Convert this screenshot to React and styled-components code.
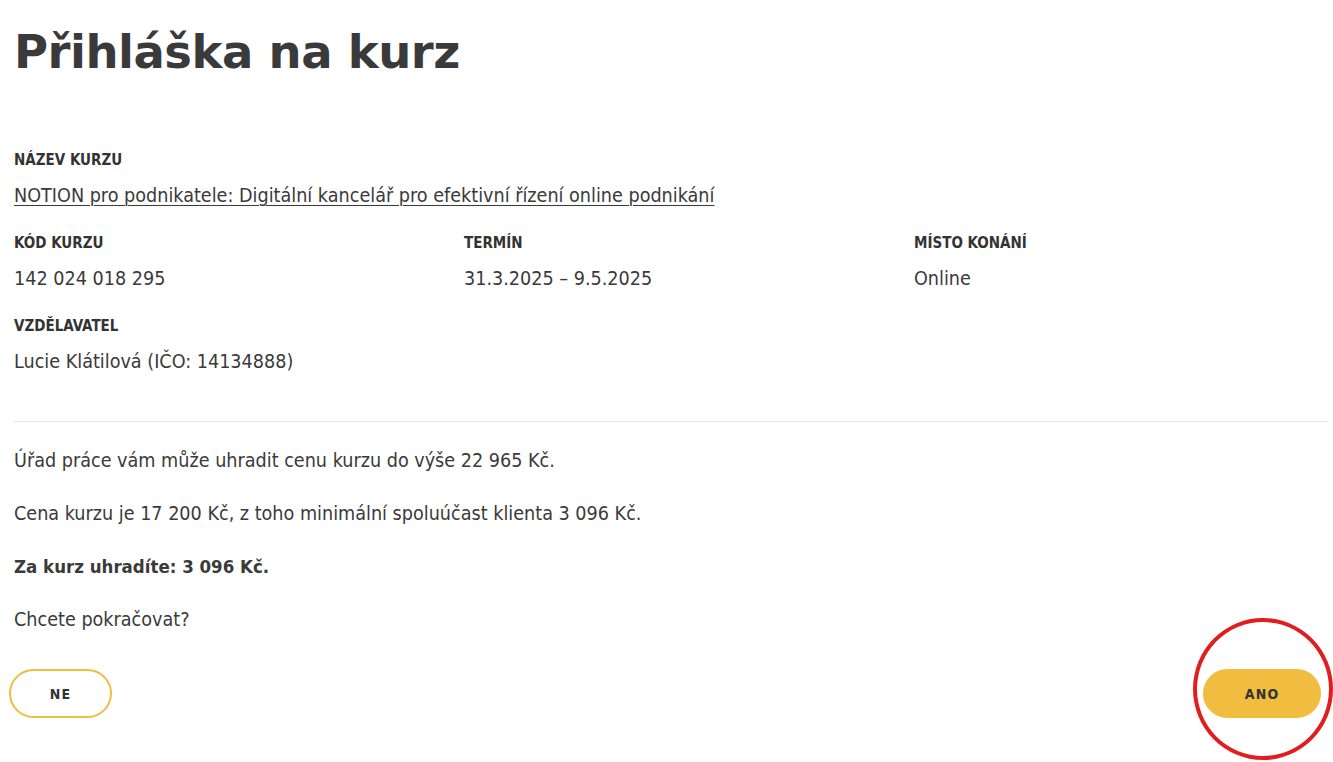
import React from "react";
import styled, { createGlobalStyle } from "styled-components";

const GlobalStyle = createGlobalStyle`
  html, body {
    margin: 0;
    padding: 0;
    background: #fff;
  }
  body {
    font-family: "Liberation Sans Narrow", "DejaVu Sans Condensed", "Liberation Sans", sans-serif;
    color: #3a3a3a;
  }
`;

const Page = styled.div`
  position: relative;
  width: 1333px;
  height: 762px;
  box-sizing: border-box;
  padding: 0 6px 0 14px;
`;

const Title = styled.h1`
  margin: 0;
  padding-top: 24px;
  font-family: "DejaVu Sans", Verdana, sans-serif;
  font-weight: 700;
  font-size: 46.5px;
  line-height: 56px;
  color: #3a3a3a;
  letter-spacing: -0.5px;
`;

const Details = styled.div`
  display: grid;
  grid-template-columns: repeat(3, 1fr);
  column-gap: 37px;
  row-gap: 27px;
  margin-top: 71px;
  padding-bottom: 48px;
  border-bottom: 1px solid #e6e6e6;
`;

const Field = styled.div`
  grid-column: ${p => (p.wide ? "1 / -1" : "auto")};
`;

const Label = styled.div`
  font-family: "DejaVu Sans Condensed", "Liberation Sans Narrow", sans-serif;
  font-weight: 700;
  font-size: 15px;
  line-height: 18px;
  text-transform: uppercase;
  color: #333;
`;

const Value = styled.div`
  margin-top: 16px;
  font-size: 19.6px;
  line-height: 22px;
`;

const Link = styled.a`
  color: #3a3a3a;
  text-decoration: underline;
  text-underline-offset: 3px;
  text-decoration-thickness: 1px;
`;

const Text = styled.p`
  margin: 0;
  margin-top: ${p => p.top || 31}px;
  font-size: ${p => (p.bold ? 18.5 : 19.6)}px;
  line-height: 22px;
  font-weight: ${p => (p.bold ? 700 : 400)};
`;

const Actions = styled.div`
  display: flex;
  justify-content: space-between;
  align-items: center;
  margin-top: 38px;
  margin-left: -5px;
  margin-right: 6px;
`;

const Button = styled.button`
  height: 49px;
  width: ${p => p.w}px;
  border-radius: 25px;
  border: 2px solid #f1bd40;
  background: ${p => (p.primary ? "#f1bd40" : "#fff")};
  font-family: "DejaVu Sans Condensed", "DejaVu Sans", sans-serif;
  font-weight: 700;
  font-size: 14px;
  letter-spacing: 1.2px;
  color: #333;
  cursor: pointer;
`;

const Highlight = styled.div`
  position: absolute;
  left: 1193px;
  top: 618px;
  width: 132px;
  height: 134px;
  border: 4px solid #e21d1d;
  border-radius: 50%;
  pointer-events: none;
`;

export default function App() {
  return (
    <>
      <GlobalStyle />
      <Page>
        <Title>Přihláška na kurz</Title>
        <Details>
          <Field wide>
            <Label>Název kurzu</Label>
            <Value>
              <Link href="#">
                NOTION pro podnikatele: Digitální kancelář pro efektivní řízení online podnikání
              </Link>
            </Value>
          </Field>
          <Field>
            <Label>Kód kurzu</Label>
            <Value>142 024 018 295</Value>
          </Field>
          <Field>
            <Label>Termín</Label>
            <Value>31.3.2025 – 9.5.2025</Value>
          </Field>
          <Field>
            <Label>Místo konání</Label>
            <Value>Online</Value>
          </Field>
          <Field wide>
            <Label>Vzdělavatel</Label>
            <Value>Lucie Klátilová (IČO: 14134888)</Value>
          </Field>
        </Details>
        <Text top={28}>Úřad práce vám může uhradit cenu kurzu do výše 22 965 Kč.</Text>
        <Text>Cena kurzu je 17 200 Kč, z toho minimální spoluúčast klienta 3 096 Kč.</Text>
        <Text bold>Za kurz uhradíte: 3 096 Kč.</Text>
        <Text>Chcete pokračovat?</Text>
        <Actions>
          <Button w={103}>NE</Button>
          <Button primary w={118}>ANO</Button>
        </Actions>
        <Highlight />
      </Page>
    </>
  );
}
